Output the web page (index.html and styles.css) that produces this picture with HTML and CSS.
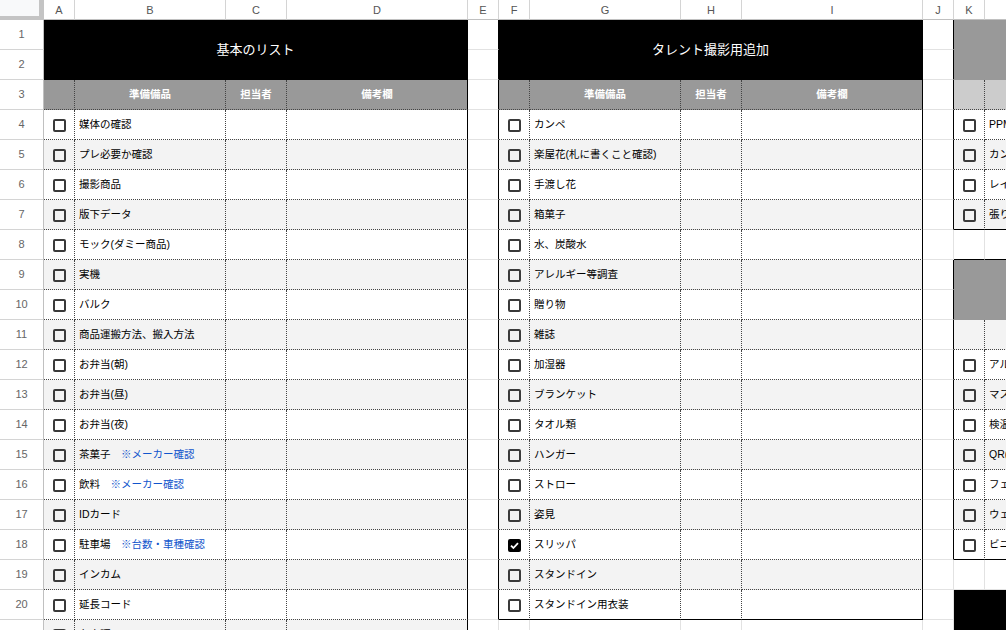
FILE: index.html
```html
<!DOCTYPE html>
<html lang="ja">
<head>
    <meta charset="UTF-8">
    <title>準備リスト</title>
    <link rel="stylesheet" href="styles.css">
</head>
<body>
    <table class="sheet">
        <colgroup>
            <col class="w-rh">
            <col class="w-cb"><col class="w-item"><col class="w-who"><col class="w-note">
            <col class="w-gap">
            <col class="w-cb"><col class="w-item"><col class="w-who"><col class="w-note">
            <col class="w-gap">
            <col class="w-cb"><col class="w-rest">
        </colgroup>
        <thead>
            <tr class="colhead">
                <th class="corner"></th>
                <th>A</th><th>B</th><th>C</th><th>D</th><th>E</th><th>F</th>
                <th>G</th><th>H</th><th>I</th><th>J</th><th>K</th><th>L</th>
            </tr>
        </thead>
        <tbody>
            <tr>
                <th>1</th>
                <td class="title" colspan="4" rowspan="2">基本のリスト</td>
                <td class="r"></td>
                <td class="title" colspan="4" rowspan="2">タレント撮影用追加</td>
                <td class="r"></td>
                <td class="sub" colspan="2" rowspan="2"></td>
            </tr>
            <tr>
                <th>2</th>
                <td class="r"></td>
                <td class="r"></td>
            </tr>
            <tr>
                <th>3</th>
                <td class="d hd"></td><td class="d hd">準備備品</td><td class="d hd">担当者</td><td class="d hd r">備考欄</td>
                <td class="r"></td>
                <td class="d hd"></td><td class="d hd">準備備品</td><td class="d hd">担当者</td><td class="d hd r">備考欄</td>
                <td class="r"></td>
                <td class="d hd2"></td><td class="d hd2"></td>
            </tr>
            <tr>
                <th>4</th>
                <td class="d"><span class="cb"></span></td><td class="d item">媒体の確認</td><td class="d"></td><td class="d r"></td>
                <td class="r"></td>
                <td class="d"><span class="cb"></span></td><td class="d item">カンペ</td><td class="d"></td><td class="d r"></td>
                <td class="r"></td>
                <td class="d"><span class="cb"></span></td><td class="d item">PPM資料</td>
            </tr>
            <tr class="alt">
                <th>5</th>
                <td class="d"><span class="cb"></span></td><td class="d item">プレ必要か確認</td><td class="d"></td><td class="d r"></td>
                <td class="r"></td>
                <td class="d"><span class="cb"></span></td><td class="d item">楽屋花(札に書くこと確認)</td><td class="d"></td><td class="d r"></td>
                <td class="r"></td>
                <td class="d"><span class="cb"></span></td><td class="d item">カンペ台</td>
            </tr>
            <tr>
                <th>6</th>
                <td class="d"><span class="cb"></span></td><td class="d item">撮影商品</td><td class="d"></td><td class="d r"></td>
                <td class="r"></td>
                <td class="d"><span class="cb"></span></td><td class="d item">手渡し花</td><td class="d"></td><td class="d r"></td>
                <td class="r"></td>
                <td class="d"><span class="cb"></span></td><td class="d item">レイアウト図</td>
            </tr>
            <tr class="alt">
                <th>7</th>
                <td class="d"><span class="cb"></span></td><td class="d item">版下データ</td><td class="d"></td><td class="d r"></td>
                <td class="r"></td>
                <td class="d"><span class="cb"></span></td><td class="d item">箱菓子</td><td class="d"></td><td class="d r"></td>
                <td class="r"></td>
                <td class="d b"><span class="cb"></span></td><td class="d item b">張り紙</td>
            </tr>
            <tr>
                <th>8</th>
                <td class="d"><span class="cb"></span></td><td class="d item">モック(ダミー商品)</td><td class="d"></td><td class="d r"></td>
                <td class="r"></td>
                <td class="d"><span class="cb"></span></td><td class="d item">水、炭酸水</td><td class="d"></td><td class="d r"></td>
                <td></td>
                <td class="b"></td><td class="b"></td>
            </tr>
            <tr class="alt">
                <th>9</th>
                <td class="d"><span class="cb"></span></td><td class="d item">実機</td><td class="d"></td><td class="d r"></td>
                <td class="r"></td>
                <td class="d"><span class="cb"></span></td><td class="d item">アレルギー等調査</td><td class="d"></td><td class="d r"></td>
                <td class="r"></td>
                <td class="sub" colspan="2" rowspan="2"></td>
            </tr>
            <tr>
                <th>10</th>
                <td class="d"><span class="cb"></span></td><td class="d item">バルク</td><td class="d"></td><td class="d r"></td>
                <td class="r"></td>
                <td class="d"><span class="cb"></span></td><td class="d item">贈り物</td><td class="d"></td><td class="d r"></td>
                <td class="r"></td>
            </tr>
            <tr class="alt">
                <th>11</th>
                <td class="d"><span class="cb"></span></td><td class="d item">商品運搬方法、搬入方法</td><td class="d"></td><td class="d r"></td>
                <td class="r"></td>
                <td class="d"><span class="cb"></span></td><td class="d item">雑誌</td><td class="d"></td><td class="d r"></td>
                <td class="r"></td>
                <td class="d hd2"></td><td class="d hd2"></td>
            </tr>
            <tr>
                <th>12</th>
                <td class="d"><span class="cb"></span></td><td class="d item">お弁当(朝)</td><td class="d"></td><td class="d r"></td>
                <td class="r"></td>
                <td class="d"><span class="cb"></span></td><td class="d item">加湿器</td><td class="d"></td><td class="d r"></td>
                <td class="r"></td>
                <td class="d"><span class="cb"></span></td><td class="d item">アルコール消毒液</td>
            </tr>
            <tr class="alt">
                <th>13</th>
                <td class="d"><span class="cb"></span></td><td class="d item">お弁当(昼)</td><td class="d"></td><td class="d r"></td>
                <td class="r"></td>
                <td class="d"><span class="cb"></span></td><td class="d item">ブランケット</td><td class="d"></td><td class="d r"></td>
                <td class="r"></td>
                <td class="d"><span class="cb"></span></td><td class="d item">マスク</td>
            </tr>
            <tr>
                <th>14</th>
                <td class="d"><span class="cb"></span></td><td class="d item">お弁当(夜)</td><td class="d"></td><td class="d r"></td>
                <td class="r"></td>
                <td class="d"><span class="cb"></span></td><td class="d item">タオル類</td><td class="d"></td><td class="d r"></td>
                <td class="r"></td>
                <td class="d"><span class="cb"></span></td><td class="d item">検温器</td>
            </tr>
            <tr class="alt">
                <th>15</th>
                <td class="d"><span class="cb"></span></td><td class="d item">茶菓子　<span class="note">※メーカー確認</span></td><td class="d"></td><td class="d r"></td>
                <td class="r"></td>
                <td class="d"><span class="cb"></span></td><td class="d item">ハンガー</td><td class="d"></td><td class="d r"></td>
                <td class="r"></td>
                <td class="d"><span class="cb"></span></td><td class="d item">QR(連絡先登録)</td>
            </tr>
            <tr>
                <th>16</th>
                <td class="d"><span class="cb"></span></td><td class="d item">飲料　<span class="note">※メーカー確認</span></td><td class="d"></td><td class="d r"></td>
                <td class="r"></td>
                <td class="d"><span class="cb"></span></td><td class="d item">ストロー</td><td class="d"></td><td class="d r"></td>
                <td class="r"></td>
                <td class="d"><span class="cb"></span></td><td class="d item">フェイスシールド</td>
            </tr>
            <tr class="alt">
                <th>17</th>
                <td class="d"><span class="cb"></span></td><td class="d item">IDカード</td><td class="d"></td><td class="d r"></td>
                <td class="r"></td>
                <td class="d"><span class="cb"></span></td><td class="d item">姿見</td><td class="d"></td><td class="d r"></td>
                <td class="r"></td>
                <td class="d"><span class="cb"></span></td><td class="d item">ウェットティッシュ</td>
            </tr>
            <tr>
                <th>18</th>
                <td class="d"><span class="cb"></span></td><td class="d item">駐車場　<span class="note">※台数・車種確認</span></td><td class="d"></td><td class="d r"></td>
                <td class="r"></td>
                <td class="d"><span class="cb on"><svg viewBox="0 0 13 13" width="13" height="13"><polyline points="3,6.6 5.4,9 10,4.2" fill="none" stroke="#fff" stroke-width="1.8"/></svg></span></td><td class="d item">スリッパ</td><td class="d"></td><td class="d r"></td>
                <td class="r"></td>
                <td class="d b"><span class="cb"></span></td><td class="d item b">ビニール手袋</td>
            </tr>
            <tr class="alt">
                <th>19</th>
                <td class="d"><span class="cb"></span></td><td class="d item">インカム</td><td class="d"></td><td class="d r"></td>
                <td class="r"></td>
                <td class="d"><span class="cb"></span></td><td class="d item">スタンドイン</td><td class="d"></td><td class="d r"></td>
                <td></td>
                <td></td><td></td>
            </tr>
            <tr>
                <th>20</th>
                <td class="d"><span class="cb"></span></td><td class="d item">延長コード</td><td class="d"></td><td class="d r"></td>
                <td class="r"></td>
                <td class="d b"><span class="cb"></span></td><td class="d item b">スタンドイン用衣装</td><td class="d b"></td><td class="d r b"></td>
                <td></td>
                <td class="blk" colspan="2" rowspan="2"></td>
            </tr>
            <tr class="alt">
                <th>21</th>
                <td class="d"><span class="cb"></span></td><td class="d item">台本類</td><td class="d"></td><td class="d r"></td>
                <td></td>
                <td></td><td></td><td></td><td></td>
                <td></td>
            </tr>
        </tbody>
    </table>
</body>
</html>
```

FILE: styles.css
```css
html, body { margin: 0; overflow: hidden; background: #fff; }
body { font-family: "Liberation Sans", "Noto Sans CJK JP", sans-serif; font-size: 10.5px; color: #000; }

.sheet { table-layout: fixed; border-collapse: separate; border-spacing: 0; width: 1185px; }
.w-rh { width: 44px; }
.w-cb { width: 31px; }
.w-item { width: 151px; }
.w-who { width: 61px; }
.w-note { width: 181px; }
.w-gap { width: 31px; }
.w-rest { width: 200px; }

th, td { box-sizing: border-box; padding: 0 0 2px; white-space: nowrap; overflow: hidden; vertical-align: middle; }
tbody tr { height: 30px; }
.colhead { height: 20px; }
.colhead th { padding: 0; }

.colhead th { font-weight: normal; font-size: 11px; color: #555; background: #fff; border-right: 1px solid #d4d4d4; border-bottom: 1px solid #c0c0c0; }
.colhead th.corner { background: #f8f9fa; border-right: 5px solid #c4c4c4; border-bottom: 4px solid #c4c4c4; }
tbody th { font-weight: normal; font-size: 11px; color: #666; background: #fff; border-right: 1px solid #c0c0c0; border-bottom: 1px solid #d4d4d4; }

td { border-right: 1px solid #e2e2e2; border-bottom: 1px solid #e2e2e2; }
td.d { border-right: 1px dotted #444; border-bottom: 1px dotted #444; }
.alt td.d { background: #f3f3f3; }
td.r { border-right: 1px solid #000; }
td.b { border-bottom: 1px solid #000; }

.title { background: #000; color: #fff; font-size: 13px; text-align: center; border-right: 1px solid #000; border-bottom: 1px solid #000; }
.sub { background: #999; border-bottom: 1px solid #999; }
.blk { background: #000; border-bottom: 1px solid #000; }
td.hd { background: #999; color: #fff; font-weight: bold; text-align: center; }
td.hd2 { background: #ccc; }

.item { padding-left: 4px; }
.note { color: #1155cc; }

.cb { display: block; box-sizing: border-box; width: 13px; height: 13px; margin: 4px auto 0; border: 2px solid #3a3a3a; border-radius: 2px; }
.cb.on { background: #000; border-color: #000; }
.cb.on svg { display: block; margin: -2px; }
```
